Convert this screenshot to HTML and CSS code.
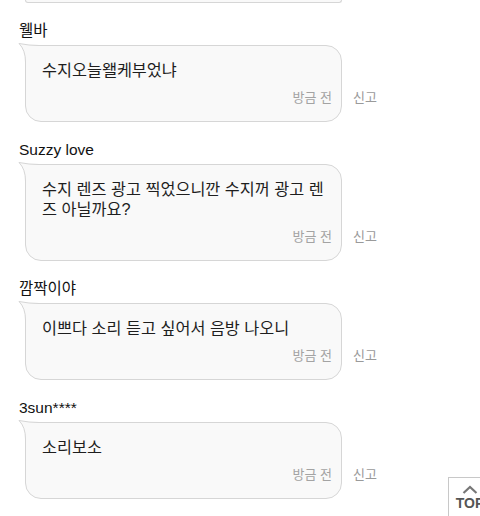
FILE: index.html
```html
<!DOCTYPE html>
<html lang="ko">
<head>
  <meta charset="UTF-8">
  <meta name="viewport" content="width=device-width, initial-scale=1.0">
  <title>댓글</title>
  <link rel="stylesheet" href="styles.css">
</head>
<body>
  <div class="feed">
    <!-- 위 댓글의 끝부분 -->
    <div class="bubble-end"></div>

    <div class="comment">
      <div class="comment-name">웰바</div>
      <div class="comment-row">
        <div class="bubble">
          <svg class="tail" width="26" height="26" viewBox="0 0 26 26">
            <path d="M2 1.5 Q12 3.5 22 3.5 L26 3.5 L26 26 L8.5 26 L8.5 20 Q8.5 8 2 1.5 Z" fill="#f9f9f9"/>
            <path d="M26 3.5 L22 3.5 Q12 3.5 2 1.5 Q8.5 8 8.5 20 L8.5 26" fill="none" stroke="#d6d6d6" stroke-width="1"/>
          </svg>
          <p class="bubble-text">수지오늘왤케부었냐</p>
          <div class="bubble-time">방금 전</div>
        </div>
        <a class="report">신고</a>
      </div>
    </div>

    <div class="comment">
      <div class="comment-name">Suzzy love</div>
      <div class="comment-row">
        <div class="bubble">
          <svg class="tail" width="26" height="26" viewBox="0 0 26 26">
            <path d="M2 1.5 Q12 3.5 22 3.5 L26 3.5 L26 26 L8.5 26 L8.5 20 Q8.5 8 2 1.5 Z" fill="#f9f9f9"/>
            <path d="M26 3.5 L22 3.5 Q12 3.5 2 1.5 Q8.5 8 8.5 20 L8.5 26" fill="none" stroke="#d6d6d6" stroke-width="1"/>
          </svg>
          <p class="bubble-text">수지 렌즈 광고 찍었으니깐 수지꺼 광고 렌즈 아닐까요?</p>
          <div class="bubble-time">방금 전</div>
        </div>
        <a class="report">신고</a>
      </div>
    </div>

    <div class="comment">
      <div class="comment-name">깜짝이야</div>
      <div class="comment-row">
        <div class="bubble">
          <svg class="tail" width="26" height="26" viewBox="0 0 26 26">
            <path d="M2 1.5 Q12 3.5 22 3.5 L26 3.5 L26 26 L8.5 26 L8.5 20 Q8.5 8 2 1.5 Z" fill="#f9f9f9"/>
            <path d="M26 3.5 L22 3.5 Q12 3.5 2 1.5 Q8.5 8 8.5 20 L8.5 26" fill="none" stroke="#d6d6d6" stroke-width="1"/>
          </svg>
          <p class="bubble-text">이쁘다 소리 듣고 싶어서 음방 나오니</p>
          <div class="bubble-time">방금 전</div>
        </div>
        <a class="report">신고</a>
      </div>
    </div>

    <div class="comment">
      <div class="comment-name">3sun****</div>
      <div class="comment-row">
        <div class="bubble">
          <svg class="tail" width="26" height="26" viewBox="0 0 26 26">
            <path d="M2 1.5 Q12 3.5 22 3.5 L26 3.5 L26 26 L8.5 26 L8.5 20 Q8.5 8 2 1.5 Z" fill="#f9f9f9"/>
            <path d="M26 3.5 L22 3.5 Q12 3.5 2 1.5 Q8.5 8 8.5 20 L8.5 26" fill="none" stroke="#d6d6d6" stroke-width="1"/>
          </svg>
          <p class="bubble-text">소리보소</p>
          <div class="bubble-time">방금 전</div>
        </div>
        <a class="report">신고</a>
      </div>
    </div>
  </div>

  <a class="top-btn">
    <svg width="16" height="9" viewBox="0 0 16 9">
      <path d="M1.5 8 L8 2 L14.5 8" fill="none" stroke="#777" stroke-width="2.2"/>
    </svg>
    <span>TOP</span>
  </a>
</body>
</html>
```

FILE: styles.css
```css
/* Estilos generales */
body {
  margin: 0;
  background: #fff;
  font-family: "Liberation Sans", "Noto Sans CJK KR", sans-serif;
  color: #222;
  overflow: hidden;
}

.feed {
  padding-left: 19px;
}

.bubble-end {
  box-sizing: border-box;
  width: 317px;
  height: 3px;
  margin-left: 6px;
  background: #f9f9f9;
  border: 1px solid #d6d6d6;
  border-top: none;
  border-radius: 0 0 16px 16px;
}

.comment {
  margin-top: 18px;
}

.comment:first-of-type {
  margin-top: 16px;
}

.comment-name {
  font-size: 15.5px;
  line-height: 20px;
  color: #111;
}

.comment-row {
  display: flex;
  align-items: flex-end;
  margin-top: 4px;
}

.bubble {
  position: relative;
  box-sizing: border-box;
  width: 317px;
  margin-left: 6px;
  padding: 14px 9px 14px 16px;
  background: #f9f9f9;
  border: 1px solid #d6d6d6;
  border-radius: 0 16px 16px 16px;
}

.tail {
  position: absolute;
  left: -9px;
  top: -4px;
  overflow: visible;
}

.bubble-text {
  position: relative;
  margin: 0;
  font-size: 16.3px;
  line-height: 20px;
  color: #1e1e1e;
  word-break: break-all;
}

.bubble-time {
  margin-top: 9px;
  text-align: right;
  font-size: 13px;
  line-height: 18px;
  color: #a3a3a3;
}

.report {
  margin: 0 0 15px 11px;
  font-size: 13px;
  line-height: 18px;
  color: #9a9a9a;
}

.top-btn {
  position: fixed;
  left: 448px;
  top: 477px;
  box-sizing: border-box;
  width: 44px;
  height: 44px;
  padding-top: 7px;
  display: flex;
  flex-direction: column;
  align-items: center;
  gap: 2px;
  background: #fff;
  border: 1px solid #c8c8c8;
}

.top-btn span {
  font-size: 14px;
  font-weight: bold;
  line-height: 15px;
  color: #555;
}
```
